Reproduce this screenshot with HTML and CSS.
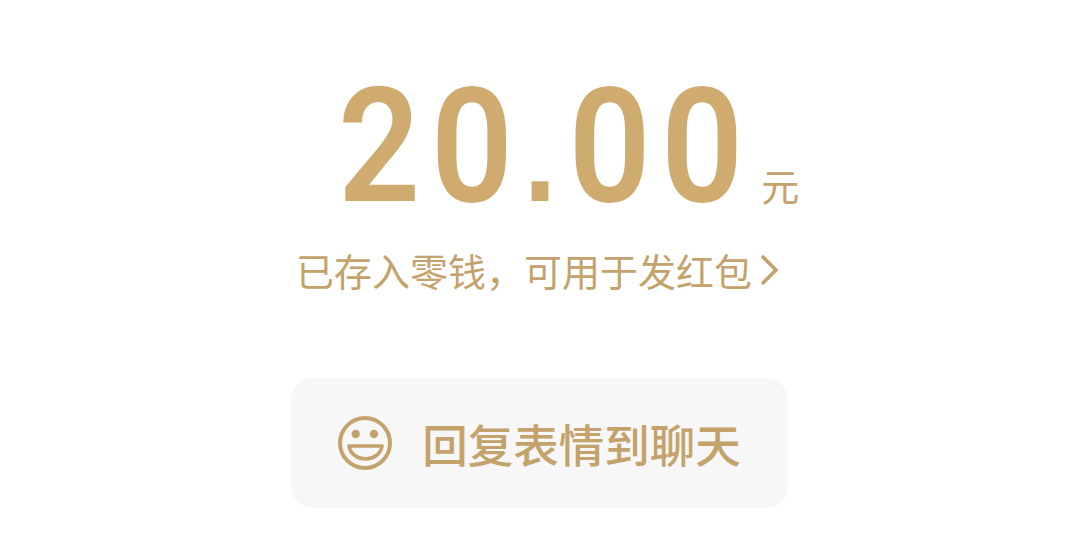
FILE: index.html
```html
<!DOCTYPE html>
<html lang="zh-CN">
<head>
    <meta charset="UTF-8">
    <title>零钱</title>
    <link rel="stylesheet" href="styles.css">
</head>
<body>
    <div class="page">
        <div class="amount">
            <span class="amount-value">20<span class="amount-dot">.</span>0<span class="amount-last">0</span></span>
            <span class="amount-unit">元</span>
        </div>
        <div class="note">
            <span>已存入零钱，可用于发红包</span>
            <svg class="note-arrow" width="18" height="32" viewBox="0 0 18 32">
                <path d="M2 2 L16 16 L2 30" fill="none" stroke="#c4a26b" stroke-width="3.5"/>
            </svg>
        </div>
        <button class="reply" type="button">
            <svg class="reply-icon" width="54" height="54" viewBox="0 0 54 54">
                <circle cx="27" cy="27" r="25" fill="none" stroke="#c4a26b" stroke-width="4"/>
                <circle cx="17.7" cy="18" r="4.2" fill="#c4a26b"/>
                <circle cx="36" cy="18" r="4.2" fill="#c4a26b"/>
                <path d="M11 30 H44 C43 38 35 43 27.5 43 C20 43 12 38 11 30 Z" fill="none" stroke="#c4a26b" stroke-width="3.6" stroke-linejoin="round"/>
            </svg>
            <span>回复表情到聊天</span>
        </button>
    </div>
</body>
</html>
```

FILE: styles.css
```css
html, body {
    margin: 0;
    padding: 0;
    background-color: #fff;
}
.page {
    width: 1080px;
    height: 560px;
    display: flex;
    flex-direction: column;
    align-items: center;
    font-family: "Noto Sans CJK SC", "Noto Sans", sans-serif;
    overflow: hidden;
}
.amount {
    display: flex;
    align-items: baseline;
    margin-top: 62px;
    margin-left: 57px;
    height: 170px;
    color: #d0ab70;
}
.amount-value {
    display: inline-block;
    font-family: "Roboto", sans-serif;
    font-size: 160px;
    font-weight: 600;
    line-height: 170px;
    letter-spacing: 11.6px;
    transform: scaleX(0.9);
    transform-origin: left center;
}
.amount-dot {
    font-family: "Liberation Sans", sans-serif;
    font-size: 132px;
    font-weight: 700;
    letter-spacing: 13.3px;
}
.amount-last {
    letter-spacing: 0;
}
.amount-unit {
    margin-left: -27px;
    font-size: 38px;
    color: #c4a26b;
}
.note {
    display: flex;
    align-items: center;
    gap: 8px;
    margin-top: 11px;
    margin-right: 6px;
    font-size: 38px;
    line-height: 54px;
    color: #c4a26b;
}
.reply {
    display: flex;
    align-items: center;
    justify-content: center;
    gap: 30px;
    width: 497px;
    height: 130px;
    margin-top: 81px;
    margin-right: 1px;
    border: none;
    border-radius: 22px;
    background-color: #f7f7f7;
    color: #c4a26b;
    font-family: inherit;
    font-size: 45.5px;
    font-weight: 500;
}
```
